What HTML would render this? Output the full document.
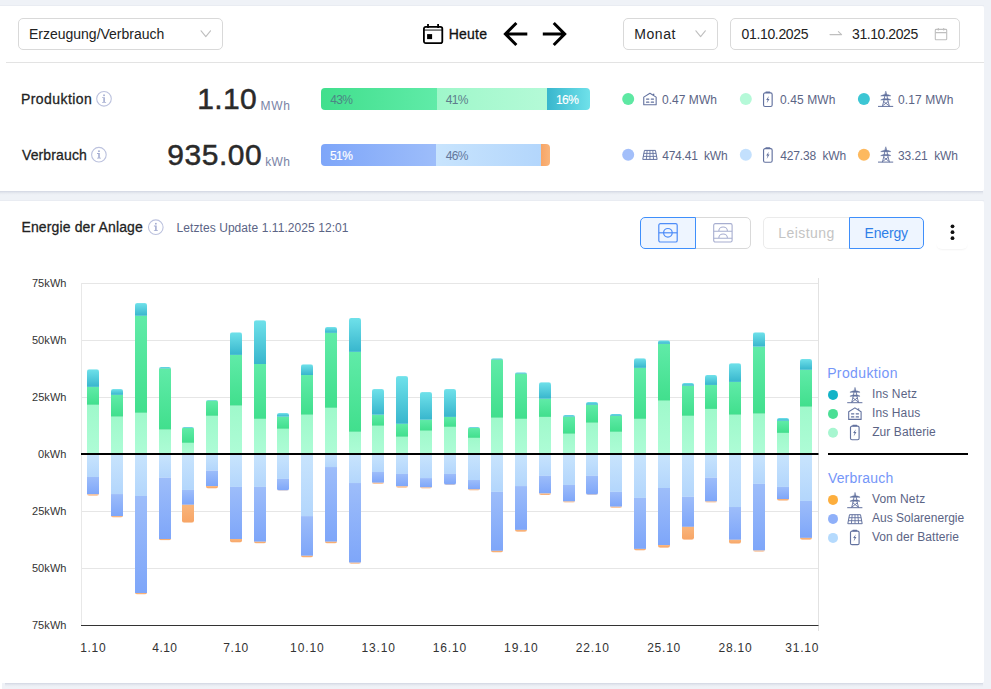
<!DOCTYPE html>
<html lang="de"><head><meta charset="utf-8"><title>Energie der Anlage</title>
<style>
html,body{margin:0;padding:0}
body{width:991px;height:689px;overflow:hidden;background:#eff2f7;position:relative;font-family:"Liberation Sans",sans-serif}
.card{position:absolute;background:#fff}
.sh{position:absolute;height:4px;background:linear-gradient(180deg,#d1d6e2 0,#e0e4ec 33%,#eaedf3 66%,#eff2f7 100%)}
.t{position:absolute;white-space:pre}
.box{position:absolute;box-sizing:border-box;border:1px solid #d9d9d9;border-radius:5px;background:#fff}
.ov{position:absolute;left:0;top:0}
</style></head><body>
<div class="sh" style="left:0;top:191px;width:983px"></div>
<div class="sh" style="left:5px;top:683px;width:978px"></div>
<div style="position:absolute;left:0;top:5px;width:984px;height:1px;background:#e9ecf2"></div>
<div style="position:absolute;left:0;top:200px;width:984px;height:1px;background:#e9ecf2"></div>
<div class="card" style="left:0;top:6px;width:984px;height:185px;border-radius:0 2px 2px 0"></div>
<div class="card" style="left:0;top:201px;width:984px;height:482px;border-radius:0 2px 2px 3px"></div>
<div style="position:absolute;left:0;top:680px;width:2px;height:9px;background:#fff"></div>
<div style="position:absolute;left:6px;top:62px;width:978px;height:1px;background:#e3e3e3"></div>
<div class="box" style="left:18px;top:18px;width:205px;height:32px"></div>
<div class="box" style="left:623px;top:18px;width:95px;height:32px"></div>
<div class="box" style="left:730px;top:18px;width:230px;height:32px"></div>
<div style="position:absolute;left:321px;top:88px;width:269px;height:22px;border-radius:4px;overflow:hidden">
<div style="position:absolute;left:0;top:0;width:116px;height:22px;background:linear-gradient(90deg,#41df8d,#60eba8)"></div>
<div style="position:absolute;left:116px;top:0;width:110px;height:22px;background:linear-gradient(90deg,#9ff7ca,#b4fad7)"></div>
<div style="position:absolute;left:226px;top:0;width:43px;height:22px;background:linear-gradient(90deg,#38b6cd,#6fe1ea)"></div></div>
<div style="position:absolute;left:321px;top:144px;width:229px;height:22px;border-radius:4px;overflow:hidden">
<div style="position:absolute;left:0;top:0;width:115px;height:22px;background:linear-gradient(90deg,#7ea6f9,#9dbdfa)"></div>
<div style="position:absolute;left:115px;top:0;width:105px;height:22px;background:linear-gradient(90deg,#c8e4fd,#b3d6fc)"></div>
<div style="position:absolute;left:220px;top:0;width:9px;height:22px;background:linear-gradient(90deg,#f7a566,#f9b57c)"></div></div>
<div class="box" style="left:695px;top:217px;width:56px;height:32px;border-radius:0 5px 5px 0"></div>
<div class="box" style="left:640px;top:217px;width:56px;height:32px;border-radius:5px 0 0 5px;border-color:#3f8ffb;background:#eef5ff"></div>
<div class="box" style="left:763px;top:217px;width:87px;height:32px;border-radius:5px 0 0 5px;border-color:#ebebeb"></div>
<div class="box" style="left:849px;top:217px;width:75px;height:32px;border-radius:0 5px 5px 0;border-color:#3f8ffb;background:#eef5ff"></div>
<div style="position:absolute;left:936px;top:217px;width:32px;height:32px;border-radius:6px;background:#fff;box-shadow:0 2px 2px -1px rgba(0,0,0,.05)"></div>
<svg style="position:absolute;left:0;top:0" width="991" height="689" viewBox="0 0 991 689">
<defs>
<linearGradient id="gN" x1="0" y1="0" x2="0" y2="1"><stop offset="0" stop-color="#6fe1ea"/><stop offset="1" stop-color="#38b6cd"/></linearGradient>
<linearGradient id="gH" x1="0" y1="0" x2="0" y2="1"><stop offset="0" stop-color="#60eba8"/><stop offset="1" stop-color="#41df8d"/></linearGradient>
<linearGradient id="gB" x1="0" y1="0" x2="0" y2="1"><stop offset="0" stop-color="#9ff9cb"/><stop offset="1" stop-color="#aefcd6"/></linearGradient>
<linearGradient id="gVB" x1="0" y1="0" x2="0" y2="1"><stop offset="0" stop-color="#c8e4fd"/><stop offset="1" stop-color="#b3d6fc"/></linearGradient>
<linearGradient id="gVS" x1="0" y1="0" x2="0" y2="1"><stop offset="0" stop-color="#9dbdfa"/><stop offset="1" stop-color="#7ea6f9"/></linearGradient>
<linearGradient id="gVN" x1="0" y1="0" x2="0" y2="1"><stop offset="0" stop-color="#f9b57c"/><stop offset="1" stop-color="#f7a566"/></linearGradient>
</defs>
<rect x="81.5" y="283.0" width="737.0" height="1" fill="#e6e6e6"/>
<rect x="81.5" y="340.0" width="737.0" height="1" fill="#e6e6e6"/>
<rect x="81.5" y="397.0" width="737.0" height="1" fill="#e6e6e6"/>
<rect x="81.5" y="511.0" width="737.0" height="1" fill="#e6e6e6"/>
<rect x="81.5" y="568.0" width="737.0" height="1" fill="#e6e6e6"/>
<rect x="81.0" y="283" width="1" height="342" fill="#e8e8e8"/>
<rect x="818.0" y="278" width="1" height="353" fill="#e2e2e2"/>
<clipPath id="c1"><path d="M87 454.0V371.43Q87 369.23 89.2 369.23H96.8Q99 369.23 99 371.43V493.52Q99 495.72 96.8 495.72H89.2Q87 495.72 87 493.52Z"/></clipPath>
<g clip-path="url(#c1)">
<rect x="87" y="404.79" width="12" height="49.21" fill="url(#gB)"/>
<rect x="87" y="386.87" width="12" height="17.92" fill="url(#gH)"/>
<rect x="87" y="369.23" width="12" height="17.64" fill="url(#gN)"/>
<rect x="87" y="454.00" width="12" height="22.97" fill="url(#gVB)"/>
<rect x="87" y="476.97" width="12" height="17.36" fill="url(#gVS)"/>
<rect x="87" y="494.34" width="12" height="1.38" fill="url(#gVN)"/>
</g>
<clipPath id="c2"><path d="M111 454.0V391.27Q111 389.07 113.2 389.07H120.8Q123 389.07 123 391.27V515.29Q123 517.49 120.8 517.49H113.2Q111 517.49 111 515.29Z"/></clipPath>
<g clip-path="url(#c2)">
<rect x="111" y="416.64" width="12" height="37.36" fill="url(#gB)"/>
<rect x="111" y="394.86" width="12" height="21.78" fill="url(#gH)"/>
<rect x="111" y="389.07" width="12" height="5.79" fill="url(#gN)"/>
<rect x="111" y="454.00" width="12" height="40.06" fill="url(#gVB)"/>
<rect x="111" y="494.06" width="12" height="22.05" fill="url(#gVS)"/>
<rect x="111" y="516.11" width="12" height="1.38" fill="url(#gVN)"/>
</g>
<clipPath id="c3"><path d="M135 454.0V305.28Q135 303.08 137.2 303.08H144.8Q147 303.08 147 305.28V592.19Q147 594.39 144.8 594.39H137.2Q135 594.39 135 592.19Z"/></clipPath>
<g clip-path="url(#c3)">
<rect x="135" y="412.78" width="12" height="41.22" fill="url(#gB)"/>
<rect x="135" y="315.76" width="12" height="97.02" fill="url(#gH)"/>
<rect x="135" y="303.08" width="12" height="12.68" fill="url(#gN)"/>
<rect x="135" y="454.00" width="12" height="41.99" fill="url(#gVB)"/>
<rect x="135" y="495.99" width="12" height="97.02" fill="url(#gVS)"/>
<rect x="135" y="593.02" width="12" height="1.38" fill="url(#gVN)"/>
</g>
<clipPath id="c4"><path d="M159 454.0V369.22Q159 367.02 161.2 367.02H168.8Q171 367.02 171 369.22V538.17Q171 540.37 168.8 540.37H161.2Q159 540.37 159 538.17Z"/></clipPath>
<g clip-path="url(#c4)">
<rect x="159" y="429.59" width="12" height="24.41" fill="url(#gB)"/>
<rect x="159" y="368.40" width="12" height="61.19" fill="url(#gH)"/>
<rect x="159" y="367.02" width="12" height="1.38" fill="url(#gN)"/>
<rect x="159" y="454.00" width="12" height="23.80" fill="url(#gVB)"/>
<rect x="159" y="477.80" width="12" height="61.19" fill="url(#gVS)"/>
<rect x="159" y="538.99" width="12" height="1.38" fill="url(#gVN)"/>
</g>
<clipPath id="c5"><path d="M182 454.0V429.31Q182 427.11 184.2 427.11H191.8Q194 427.11 194 429.31V520.53Q194 522.73 191.8 522.73H184.2Q182 522.73 182 520.53Z"/></clipPath>
<g clip-path="url(#c5)">
<rect x="182" y="442.82" width="12" height="11.18" fill="url(#gB)"/>
<rect x="182" y="427.94" width="12" height="14.88" fill="url(#gH)"/>
<rect x="182" y="427.11" width="12" height="0.83" fill="url(#gN)"/>
<rect x="182" y="454.00" width="12" height="35.93" fill="url(#gVB)"/>
<rect x="182" y="489.93" width="12" height="14.88" fill="url(#gVS)"/>
<rect x="182" y="504.81" width="12" height="17.92" fill="url(#gVN)"/>
</g>
<clipPath id="c6"><path d="M206 454.0V402.30Q206 400.10 208.2 400.10H215.8Q218 400.10 218 402.30V486.35Q218 488.55 215.8 488.55H208.2Q206 488.55 206 486.35Z"/></clipPath>
<g clip-path="url(#c6)">
<rect x="206" y="415.81" width="12" height="38.19" fill="url(#gB)"/>
<rect x="206" y="400.65" width="12" height="15.16" fill="url(#gH)"/>
<rect x="206" y="400.10" width="12" height="0.55" fill="url(#gN)"/>
<rect x="206" y="454.00" width="12" height="16.63" fill="url(#gVB)"/>
<rect x="206" y="470.63" width="12" height="15.44" fill="url(#gVS)"/>
<rect x="206" y="486.07" width="12" height="2.48" fill="url(#gVN)"/>
</g>
<clipPath id="c7"><path d="M230 454.0V334.49Q230 332.29 232.2 332.29H239.8Q242 332.29 242 334.49V540.37Q242 542.57 239.8 542.57H232.2Q230 542.57 230 540.37Z"/></clipPath>
<g clip-path="url(#c7)">
<rect x="230" y="405.61" width="12" height="48.39" fill="url(#gB)"/>
<rect x="230" y="354.90" width="12" height="50.72" fill="url(#gH)"/>
<rect x="230" y="332.29" width="12" height="22.60" fill="url(#gN)"/>
<rect x="230" y="454.00" width="12" height="32.90" fill="url(#gVB)"/>
<rect x="230" y="486.90" width="12" height="52.09" fill="url(#gVS)"/>
<rect x="230" y="538.99" width="12" height="3.58" fill="url(#gVN)"/>
</g>
<clipPath id="c8"><path d="M254 454.0V322.37Q254 320.17 256.2 320.17H263.8Q266 320.17 266 322.37V541.20Q266 543.40 263.8 543.40H256.2Q254 543.40 254 541.20Z"/></clipPath>
<g clip-path="url(#c8)">
<rect x="254" y="418.84" width="12" height="35.16" fill="url(#gB)"/>
<rect x="254" y="363.99" width="12" height="54.85" fill="url(#gH)"/>
<rect x="254" y="320.17" width="12" height="43.83" fill="url(#gN)"/>
<rect x="254" y="454.00" width="12" height="32.90" fill="url(#gVB)"/>
<rect x="254" y="486.90" width="12" height="54.85" fill="url(#gVS)"/>
<rect x="254" y="541.75" width="12" height="1.65" fill="url(#gVN)"/>
</g>
<clipPath id="c9"><path d="M277 454.0V415.25Q277 413.05 279.2 413.05H286.8Q289 413.05 289 415.25V488.56Q289 490.76 286.8 490.76H279.2Q277 490.76 277 488.56Z"/></clipPath>
<g clip-path="url(#c9)">
<rect x="277" y="428.77" width="12" height="25.23" fill="url(#gB)"/>
<rect x="277" y="416.64" width="12" height="12.13" fill="url(#gH)"/>
<rect x="277" y="413.05" width="12" height="3.58" fill="url(#gN)"/>
<rect x="277" y="454.00" width="12" height="24.90" fill="url(#gVB)"/>
<rect x="277" y="478.90" width="12" height="11.58" fill="url(#gVS)"/>
<rect x="277" y="490.48" width="12" height="0.28" fill="url(#gVN)"/>
</g>
<clipPath id="c10"><path d="M301 454.0V366.47Q301 364.27 303.2 364.27H310.8Q313 364.27 313 366.47V555.26Q313 557.46 310.8 557.46H303.2Q301 557.46 301 555.26Z"/></clipPath>
<g clip-path="url(#c10)">
<rect x="301" y="414.71" width="12" height="39.29" fill="url(#gB)"/>
<rect x="301" y="375.02" width="12" height="39.69" fill="url(#gH)"/>
<rect x="301" y="364.27" width="12" height="10.75" fill="url(#gN)"/>
<rect x="301" y="454.00" width="12" height="62.11" fill="url(#gVB)"/>
<rect x="301" y="516.11" width="12" height="39.69" fill="url(#gVS)"/>
<rect x="301" y="555.80" width="12" height="1.65" fill="url(#gVN)"/>
</g>
<clipPath id="c11"><path d="M325 454.0V329.26Q325 327.06 327.2 327.06H334.8Q337 327.06 337 329.26V541.20Q337 543.40 334.8 543.40H327.2Q325 543.40 325 541.20Z"/></clipPath>
<g clip-path="url(#c11)">
<rect x="325" y="407.82" width="12" height="46.18" fill="url(#gB)"/>
<rect x="325" y="332.84" width="12" height="74.97" fill="url(#gH)"/>
<rect x="325" y="327.06" width="12" height="5.79" fill="url(#gN)"/>
<rect x="325" y="454.00" width="12" height="13.05" fill="url(#gVB)"/>
<rect x="325" y="467.05" width="12" height="74.70" fill="url(#gVS)"/>
<rect x="325" y="541.75" width="12" height="1.65" fill="url(#gVN)"/>
</g>
<clipPath id="c12"><path d="M349 454.0V320.16Q349 317.96 351.2 317.96H358.8Q361 317.96 361 320.16V561.60Q361 563.80 358.8 563.80H351.2Q349 563.80 349 561.60Z"/></clipPath>
<g clip-path="url(#c12)">
<rect x="349" y="431.80" width="12" height="22.20" fill="url(#gB)"/>
<rect x="349" y="351.86" width="12" height="79.93" fill="url(#gH)"/>
<rect x="349" y="317.96" width="12" height="33.90" fill="url(#gN)"/>
<rect x="349" y="454.00" width="12" height="29.04" fill="url(#gVB)"/>
<rect x="349" y="483.04" width="12" height="79.66" fill="url(#gVS)"/>
<rect x="349" y="562.70" width="12" height="1.10" fill="url(#gVN)"/>
</g>
<clipPath id="c13"><path d="M372 454.0V391.27Q372 389.07 374.2 389.07H381.8Q384 389.07 384 391.27V481.66Q384 483.86 381.8 483.86H374.2Q372 483.86 372 481.66Z"/></clipPath>
<g clip-path="url(#c13)">
<rect x="372" y="425.73" width="12" height="28.27" fill="url(#gB)"/>
<rect x="372" y="414.71" width="12" height="11.03" fill="url(#gH)"/>
<rect x="372" y="389.07" width="12" height="25.63" fill="url(#gN)"/>
<rect x="372" y="454.00" width="12" height="18.01" fill="url(#gVB)"/>
<rect x="372" y="472.01" width="12" height="10.75" fill="url(#gVS)"/>
<rect x="372" y="482.76" width="12" height="1.10" fill="url(#gVN)"/>
</g>
<clipPath id="c14"><path d="M396 454.0V378.32Q396 376.12 398.2 376.12H405.8Q408 376.12 408 378.32V485.52Q408 487.72 405.8 487.72H398.2Q396 487.72 396 485.52Z"/></clipPath>
<g clip-path="url(#c14)">
<rect x="396" y="436.76" width="12" height="17.24" fill="url(#gB)"/>
<rect x="396" y="423.80" width="12" height="12.95" fill="url(#gH)"/>
<rect x="396" y="376.12" width="12" height="47.68" fill="url(#gN)"/>
<rect x="396" y="454.00" width="12" height="19.94" fill="url(#gVB)"/>
<rect x="396" y="473.94" width="12" height="12.40" fill="url(#gVS)"/>
<rect x="396" y="486.35" width="12" height="1.38" fill="url(#gVN)"/>
</g>
<clipPath id="c15"><path d="M420 454.0V394.31Q420 392.11 422.2 392.11H429.8Q432 392.11 432 394.31V486.35Q432 488.55 429.8 488.55H422.2Q420 488.55 420 486.35Z"/></clipPath>
<g clip-path="url(#c15)">
<rect x="420" y="430.69" width="12" height="23.31" fill="url(#gB)"/>
<rect x="420" y="419.67" width="12" height="11.03" fill="url(#gH)"/>
<rect x="420" y="392.11" width="12" height="27.56" fill="url(#gN)"/>
<rect x="420" y="454.00" width="12" height="24.08" fill="url(#gVB)"/>
<rect x="420" y="478.08" width="12" height="9.37" fill="url(#gVS)"/>
<rect x="420" y="487.45" width="12" height="1.10" fill="url(#gVN)"/>
</g>
<clipPath id="c16"><path d="M444 454.0V391.27Q444 389.07 446.2 389.07H453.8Q456 389.07 456 391.27V482.77Q456 484.97 453.8 484.97H446.2Q444 484.97 444 482.77Z"/></clipPath>
<g clip-path="url(#c16)">
<rect x="444" y="426.84" width="12" height="27.16" fill="url(#gB)"/>
<rect x="444" y="416.91" width="12" height="9.92" fill="url(#gH)"/>
<rect x="444" y="389.07" width="12" height="27.84" fill="url(#gN)"/>
<rect x="444" y="454.00" width="12" height="19.94" fill="url(#gVB)"/>
<rect x="444" y="473.94" width="12" height="10.75" fill="url(#gVS)"/>
<rect x="444" y="484.69" width="12" height="0.28" fill="url(#gVN)"/>
</g>
<clipPath id="c17"><path d="M468 454.0V429.31Q468 427.11 470.2 427.11H477.8Q480 427.11 480 429.31V488.28Q480 490.48 477.8 490.48H470.2Q468 490.48 468 488.28Z"/></clipPath>
<g clip-path="url(#c17)">
<rect x="468" y="437.86" width="12" height="16.14" fill="url(#gB)"/>
<rect x="468" y="427.94" width="12" height="9.92" fill="url(#gH)"/>
<rect x="468" y="427.11" width="12" height="0.83" fill="url(#gN)"/>
<rect x="468" y="454.00" width="12" height="26.01" fill="url(#gVB)"/>
<rect x="468" y="480.01" width="12" height="9.37" fill="url(#gVS)"/>
<rect x="468" y="489.38" width="12" height="1.10" fill="url(#gVN)"/>
</g>
<clipPath id="c18"><path d="M491 454.0V360.40Q491 358.20 493.2 358.20H500.8Q503 358.20 503 360.40V550.30Q503 552.50 500.8 552.50H493.2Q491 552.50 491 550.30Z"/></clipPath>
<g clip-path="url(#c18)">
<rect x="491" y="417.74" width="12" height="36.26" fill="url(#gB)"/>
<rect x="491" y="359.58" width="12" height="58.16" fill="url(#gH)"/>
<rect x="491" y="358.20" width="12" height="1.38" fill="url(#gN)"/>
<rect x="491" y="454.00" width="12" height="37.86" fill="url(#gVB)"/>
<rect x="491" y="491.86" width="12" height="58.99" fill="url(#gVS)"/>
<rect x="491" y="550.84" width="12" height="1.65" fill="url(#gVN)"/>
</g>
<clipPath id="c19"><path d="M515 454.0V374.46Q515 372.26 517.2 372.26H524.8Q527 372.26 527 374.46V529.62Q527 531.82 524.8 531.82H517.2Q515 531.82 515 529.62Z"/></clipPath>
<g clip-path="url(#c19)">
<rect x="515" y="418.84" width="12" height="35.16" fill="url(#gB)"/>
<rect x="515" y="373.64" width="12" height="45.20" fill="url(#gH)"/>
<rect x="515" y="372.26" width="12" height="1.38" fill="url(#gN)"/>
<rect x="515" y="454.00" width="12" height="32.07" fill="url(#gVB)"/>
<rect x="515" y="486.07" width="12" height="43.83" fill="url(#gVS)"/>
<rect x="515" y="529.90" width="12" height="1.93" fill="url(#gVN)"/>
</g>
<clipPath id="c20"><path d="M539 454.0V384.38Q539 382.18 541.2 382.18H548.8Q551 382.18 551 384.38V492.69Q551 494.89 548.8 494.89H541.2Q539 494.89 539 492.69Z"/></clipPath>
<g clip-path="url(#c20)">
<rect x="539" y="416.91" width="12" height="37.09" fill="url(#gB)"/>
<rect x="539" y="398.72" width="12" height="18.19" fill="url(#gH)"/>
<rect x="539" y="382.18" width="12" height="16.54" fill="url(#gN)"/>
<rect x="539" y="454.00" width="12" height="21.87" fill="url(#gVB)"/>
<rect x="539" y="475.87" width="12" height="17.64" fill="url(#gVS)"/>
<rect x="539" y="493.51" width="12" height="1.38" fill="url(#gVN)"/>
</g>
<clipPath id="c21"><path d="M563 454.0V417.18Q563 414.98 565.2 414.98H572.8Q575 414.98 575 417.18V500.41Q575 502.61 572.8 502.61H565.2Q563 502.61 563 500.41Z"/></clipPath>
<g clip-path="url(#c21)">
<rect x="563" y="433.73" width="12" height="20.27" fill="url(#gB)"/>
<rect x="563" y="416.64" width="12" height="17.09" fill="url(#gH)"/>
<rect x="563" y="414.98" width="12" height="1.65" fill="url(#gN)"/>
<rect x="563" y="454.00" width="12" height="30.97" fill="url(#gVB)"/>
<rect x="563" y="484.97" width="12" height="16.54" fill="url(#gVS)"/>
<rect x="563" y="501.50" width="12" height="1.10" fill="url(#gVN)"/>
</g>
<clipPath id="c22"><path d="M586 454.0V404.23Q586 402.03 588.2 402.03H595.8Q598 402.03 598 404.23V492.69Q598 494.89 595.8 494.89H588.2Q586 494.89 586 492.69Z"/></clipPath>
<g clip-path="url(#c22)">
<rect x="586" y="422.70" width="12" height="31.30" fill="url(#gB)"/>
<rect x="586" y="404.79" width="12" height="17.92" fill="url(#gH)"/>
<rect x="586" y="402.03" width="12" height="2.76" fill="url(#gN)"/>
<rect x="586" y="454.00" width="12" height="21.87" fill="url(#gVB)"/>
<rect x="586" y="475.87" width="12" height="18.74" fill="url(#gVS)"/>
<rect x="586" y="494.61" width="12" height="0.28" fill="url(#gVN)"/>
</g>
<clipPath id="c23"><path d="M610 454.0V416.08Q610 413.88 612.2 413.88H619.8Q622 413.88 622 416.08V505.64Q622 507.84 619.8 507.84H612.2Q610 507.84 610 505.64Z"/></clipPath>
<g clip-path="url(#c23)">
<rect x="610" y="431.80" width="12" height="22.20" fill="url(#gB)"/>
<rect x="610" y="415.81" width="12" height="15.99" fill="url(#gH)"/>
<rect x="610" y="413.88" width="12" height="1.93" fill="url(#gN)"/>
<rect x="610" y="454.00" width="12" height="37.86" fill="url(#gVB)"/>
<rect x="610" y="491.86" width="12" height="14.88" fill="url(#gVS)"/>
<rect x="610" y="506.74" width="12" height="1.10" fill="url(#gVN)"/>
</g>
<clipPath id="c24"><path d="M634 454.0V360.40Q634 358.20 636.2 358.20H643.8Q646 358.20 646 360.40V548.37Q646 550.57 643.8 550.57H636.2Q634 550.57 634 548.37Z"/></clipPath>
<g clip-path="url(#c24)">
<rect x="634" y="418.84" width="12" height="35.16" fill="url(#gB)"/>
<rect x="634" y="367.85" width="12" height="50.99" fill="url(#gH)"/>
<rect x="634" y="358.20" width="12" height="9.65" fill="url(#gN)"/>
<rect x="634" y="454.00" width="12" height="43.92" fill="url(#gVB)"/>
<rect x="634" y="497.92" width="12" height="50.99" fill="url(#gVS)"/>
<rect x="634" y="548.91" width="12" height="1.65" fill="url(#gVN)"/>
</g>
<clipPath id="c25"><path d="M658 454.0V342.49Q658 340.29 660.2 340.29H667.8Q670 340.29 670 342.49V545.61Q670 547.81 667.8 547.81H660.2Q658 547.81 658 545.61Z"/></clipPath>
<g clip-path="url(#c25)">
<rect x="658" y="400.65" width="12" height="53.35" fill="url(#gB)"/>
<rect x="658" y="343.87" width="12" height="56.78" fill="url(#gH)"/>
<rect x="658" y="340.29" width="12" height="3.58" fill="url(#gN)"/>
<rect x="658" y="454.00" width="12" height="34.00" fill="url(#gVB)"/>
<rect x="658" y="488.00" width="12" height="57.06" fill="url(#gVS)"/>
<rect x="658" y="545.06" width="12" height="2.76" fill="url(#gVN)"/>
</g>
<clipPath id="c26"><path d="M682 454.0V385.21Q682 383.01 684.2 383.01H691.8Q694 383.01 694 385.21V537.62Q694 539.82 691.8 539.82H684.2Q682 539.82 682 537.62Z"/></clipPath>
<g clip-path="url(#c26)">
<rect x="682" y="415.81" width="12" height="38.19" fill="url(#gB)"/>
<rect x="682" y="385.77" width="12" height="30.04" fill="url(#gH)"/>
<rect x="682" y="383.01" width="12" height="2.76" fill="url(#gN)"/>
<rect x="682" y="454.00" width="12" height="42.82" fill="url(#gVB)"/>
<rect x="682" y="496.82" width="12" height="30.04" fill="url(#gVS)"/>
<rect x="682" y="526.86" width="12" height="12.95" fill="url(#gVN)"/>
</g>
<clipPath id="c27"><path d="M705 454.0V377.22Q705 375.02 707.2 375.02H714.8Q717 375.02 717 377.22V500.41Q717 502.61 714.8 502.61H707.2Q705 502.61 705 500.41Z"/></clipPath>
<g clip-path="url(#c27)">
<rect x="705" y="408.92" width="12" height="45.08" fill="url(#gB)"/>
<rect x="705" y="384.94" width="12" height="23.98" fill="url(#gH)"/>
<rect x="705" y="375.02" width="12" height="9.92" fill="url(#gN)"/>
<rect x="705" y="454.00" width="12" height="23.80" fill="url(#gVB)"/>
<rect x="705" y="477.80" width="12" height="23.70" fill="url(#gVS)"/>
<rect x="705" y="501.50" width="12" height="1.10" fill="url(#gVN)"/>
</g>
<clipPath id="c28"><path d="M729 454.0V365.36Q729 363.16 731.2 363.16H738.8Q741 363.16 741 365.36V541.48Q741 543.68 738.8 543.68H731.2Q729 543.68 729 541.48Z"/></clipPath>
<g clip-path="url(#c28)">
<rect x="729" y="414.71" width="12" height="39.29" fill="url(#gB)"/>
<rect x="729" y="381.91" width="12" height="32.80" fill="url(#gH)"/>
<rect x="729" y="363.16" width="12" height="18.74" fill="url(#gN)"/>
<rect x="729" y="454.00" width="12" height="53.02" fill="url(#gVB)"/>
<rect x="729" y="507.02" width="12" height="32.80" fill="url(#gVS)"/>
<rect x="729" y="539.82" width="12" height="3.86" fill="url(#gVN)"/>
</g>
<clipPath id="c29"><path d="M753 454.0V334.49Q753 332.29 755.2 332.29H762.8Q765 332.29 765 334.49V549.47Q765 551.67 762.8 551.67H755.2Q753 551.67 753 549.47Z"/></clipPath>
<g clip-path="url(#c29)">
<rect x="753" y="413.61" width="12" height="40.39" fill="url(#gB)"/>
<rect x="753" y="346.63" width="12" height="66.98" fill="url(#gH)"/>
<rect x="753" y="332.29" width="12" height="14.33" fill="url(#gN)"/>
<rect x="753" y="454.00" width="12" height="29.86" fill="url(#gVB)"/>
<rect x="753" y="483.86" width="12" height="66.70" fill="url(#gVS)"/>
<rect x="753" y="550.57" width="12" height="1.10" fill="url(#gVN)"/>
</g>
<clipPath id="c30"><path d="M777 454.0V420.22Q777 418.02 779.2 418.02H786.8Q789 418.02 789 420.22V498.48Q789 500.68 786.8 500.68H779.2Q777 500.68 777 498.48Z"/></clipPath>
<g clip-path="url(#c30)">
<rect x="777" y="432.90" width="12" height="21.10" fill="url(#gB)"/>
<rect x="777" y="420.77" width="12" height="12.13" fill="url(#gH)"/>
<rect x="777" y="418.02" width="12" height="2.76" fill="url(#gN)"/>
<rect x="777" y="454.00" width="12" height="32.90" fill="url(#gVB)"/>
<rect x="777" y="486.90" width="12" height="12.13" fill="url(#gVS)"/>
<rect x="777" y="499.02" width="12" height="1.65" fill="url(#gVN)"/>
</g>
<clipPath id="c31"><path d="M800 454.0V361.23Q800 359.03 802.2 359.03H809.8Q812 359.03 812 361.23V537.62Q812 539.82 809.8 539.82H802.2Q800 539.82 800 537.62Z"/></clipPath>
<g clip-path="url(#c31)">
<rect x="800" y="406.71" width="12" height="47.29" fill="url(#gB)"/>
<rect x="800" y="369.78" width="12" height="36.93" fill="url(#gH)"/>
<rect x="800" y="359.03" width="12" height="10.75" fill="url(#gN)"/>
<rect x="800" y="454.00" width="12" height="46.95" fill="url(#gVB)"/>
<rect x="800" y="500.95" width="12" height="36.93" fill="url(#gVS)"/>
<rect x="800" y="537.89" width="12" height="1.93" fill="url(#gVN)"/>
</g>
<rect x="81.0" y="453.0" width="737.5" height="2" fill="#000"/>
<rect x="81.0" y="625" width="737.5" height="1" fill="#333"/>
<rect x="828" y="453.0" width="140" height="2" fill="#000"/>
<g transform="translate(199.8 28)" fill="none" stroke="#bfbfbf" stroke-width="1.1" stroke-linecap="round" stroke-linejoin="round"><path d="M1.3 2.8L6 8.6L10.7 2.8"/></g>
<g transform="translate(694.6 28)" fill="none" stroke="#bfbfbf" stroke-width="1.1" stroke-linecap="round" stroke-linejoin="round"><path d="M1.3 2.8L6 8.6L10.7 2.8"/></g>
<g transform="translate(829 28)" fill="none" stroke="#bfbfbf" stroke-width="1.1" stroke-linecap="round" stroke-linejoin="round"><path d="M1 6.6H12.6L9.4 3.6"/></g>
<g transform="translate(934 27)" fill="none" stroke="#bfbfbf" stroke-width="1.1" stroke-linejoin="round"><rect x="1.3" y="2.4" width="11.4" height="10.4" rx="0.8"/><path d="M1.3 5.6H12.7M4.3 1V3.4M9.7 1V3.4"/></g>
<g transform="translate(423 24)"><rect x="0.9" y="2.9" width="18.4" height="16.2" rx="1.9" fill="none" stroke="#000" stroke-width="1.8"/><rect x="1" y="5.6" width="18" height="0.9" fill="#000"/><rect x="4.1" y="0" width="1.8" height="4" fill="#000"/><rect x="14.2" y="0" width="1.8" height="4" fill="#000"/><rect x="4.1" y="10.1" width="5" height="5" fill="#000"/></g>
<g transform="translate(497.3 16) scale(1.5)"><path fill="#000" d="M20 11H7.83l5.59-5.59L12 4l-8 8 8 8 1.41-1.41L7.83 13H20v-2z"/></g>
<g transform="translate(536.8 16) scale(1.5)"><path fill="#000" d="M12 4l-1.41 1.41L16.17 11H4v2h12.17l-5.58 5.59L12 20l8-8z"/></g>
<g transform="translate(95.5 90.3)"><circle cx="8.5" cy="8.5" r="7.3" fill="none" stroke="#bcc2de" stroke-width="1.1"/>
<rect x="7.7" y="4.2" width="1.7" height="1.6" fill="#a6aed2"/><path d="M6.6 6.9H9.4V11.6H10.6V12.4H6.6V11.6H7.8V7.7H6.6Z" fill="#a6aed2"/></g>
<g transform="translate(90.4 146.2)"><circle cx="8.5" cy="8.5" r="7.3" fill="none" stroke="#bcc2de" stroke-width="1.1"/>
<rect x="7.7" y="4.2" width="1.7" height="1.6" fill="#a6aed2"/><path d="M6.6 6.9H9.4V11.6H10.6V12.4H6.6V11.6H7.8V7.7H6.6Z" fill="#a6aed2"/></g>
<g transform="translate(147.3 218.7)"><circle cx="8.5" cy="8.5" r="7.3" fill="none" stroke="#bcc2de" stroke-width="1.1"/>
<rect x="7.7" y="4.2" width="1.7" height="1.6" fill="#a6aed2"/><path d="M6.6 6.9H9.4V11.6H10.6V12.4H6.6V11.6H7.8V7.7H6.6Z" fill="#a6aed2"/></g>
<circle cx="628.2" cy="99" r="6.0" fill="#5ee8a3"/>
<circle cx="745.8" cy="99" r="6.0" fill="#b5f9d8"/>
<circle cx="863.9" cy="99" r="6.0" fill="#3cc6d4"/>
<circle cx="628.2" cy="154.7" r="6.0" fill="#a3bffa"/>
<circle cx="745.8" cy="154.7" r="6.0" fill="#c3e0fd"/>
<circle cx="863.9" cy="154.7" r="6.0" fill="#fdb95e"/>
<g transform="translate(642.95 92.5)" fill="none" stroke="#63729f" stroke-width="1.1" stroke-linejoin="round" stroke-linecap="round">
<path d="M0.8 4.6L7 0.7L13.2 4.6V12.2H0.8Z"/><path d="M10.6 2.6V1.2" stroke-width="1.5" stroke-linecap="butt"/>
<path d="M3.6 6.6H5.9M8.3 6.6H10.6M3.6 9.7H5.9M8.3 9.7H10.6" stroke-width="1.2"/></g>
<g transform="translate(762.65 91.4)" fill="none" stroke="#63729f" stroke-width="1.15" stroke-linejoin="round">
<rect x="0.9" y="1.5" width="8.6" height="13.6" rx="1.5"/><path d="M3.4 0.9H7" stroke-width="1.4" stroke-linecap="round"/>
<path d="M6.2 4.6L3.5 8.5H5L4 11.9L6.9 7.5H5.4Z" fill="#63729f" stroke="none"/></g>
<g transform="translate(877.7 91.0)" fill="none" stroke="#63729f" stroke-width="1" stroke-linecap="round" stroke-linejoin="round">
<path d="M0.7 15.4H15.1" stroke-width="1"/>
<path d="M8.2 0.4L9.2 4.1H7.2ZM3.4 4.75L5.8 3.75H10.6L13 4.75V4.95H3.4ZM3.4 8.75L5.8 7.7H10.6L13 8.75V8.95H3.4Z" fill="#63729f" stroke-width="0.5"/>
<path d="M7.2 4.5L6.5 8M9.2 4.5L9.9 8M6.4 9L4.7 15.2M10 9L11.7 15.2M6 10.6L11 14.4M10.4 10.6L5.4 14.4" stroke-width="0.9"/></g>
<g transform="translate(642.15 149.3)" fill="none" stroke="#63729f" stroke-width="1" stroke-linejoin="round">
<path d="M2.3 1.1H13.3L15 10.1H0.6Z"/><path d="M1.7 4.1H13.9M1.1 7.1H14.5M5 1.1L4.2 10.1M7.8 1.1V10.1M10.6 1.1L11.4 10.1" stroke-width="0.9"/></g>
<g transform="translate(762.65 147.1)" fill="none" stroke="#63729f" stroke-width="1.15" stroke-linejoin="round">
<rect x="0.9" y="1.5" width="8.6" height="13.6" rx="1.5"/><path d="M3.4 0.9H7" stroke-width="1.4" stroke-linecap="round"/>
<path d="M6.2 4.6L3.5 8.5H5L4 11.9L6.9 7.5H5.4Z" fill="#63729f" stroke="none"/></g>
<g transform="translate(877.7 146.7)" fill="none" stroke="#63729f" stroke-width="1" stroke-linecap="round" stroke-linejoin="round">
<path d="M0.7 15.4H15.1" stroke-width="1"/>
<path d="M8.2 0.4L9.2 4.1H7.2ZM3.4 4.75L5.8 3.75H10.6L13 4.75V4.95H3.4ZM3.4 8.75L5.8 7.7H10.6L13 8.75V8.95H3.4Z" fill="#63729f" stroke-width="0.5"/>
<path d="M7.2 4.5L6.5 8M9.2 4.5L9.9 8M6.4 9L4.7 15.2M10 9L11.7 15.2M6 10.6L11 14.4M10.4 10.6L5.4 14.4" stroke-width="0.9"/></g>
<g transform="translate(657.6 222.4)" fill="none" stroke="#4d8cf8" stroke-width="1.2"><rect x="1.2" y="1.2" width="18.4" height="18.4" rx="1.6"/><path d="M1.2 10.4H19.6"/><circle cx="10.3" cy="10.4" r="4.3"/></g>
<g transform="translate(712.5 222.4)" fill="none" stroke="#a7aed0" stroke-width="1.1"><rect x="1.2" y="1.2" width="18.4" height="18.4" rx="1.6"/><path d="M1.2 8.8H19.6M1.2 15.8H19.6M6.3 8.6A4.3 4 0 0 1 14.9 8.6M6.3 15.6A4.3 4 0 0 1 14.9 15.6"/></g>
<circle cx="952.5" cy="226.3" r="1.9" fill="#111"/>
<circle cx="952.5" cy="232.2" r="1.9" fill="#111"/>
<circle cx="952.5" cy="238.2" r="1.9" fill="#111"/>
<circle cx="833.0" cy="394.9" r="5.0" fill="#12b3c7"/>
<circle cx="833.0" cy="413.9" r="5.0" fill="#4bdf95"/>
<circle cx="833.0" cy="432.8" r="5.0" fill="#a7f6d0"/>
<circle cx="833.0" cy="499.9" r="5.0" fill="#fdae3d"/>
<circle cx="833.0" cy="518.9" r="5.0" fill="#8fb0f9"/>
<circle cx="833.0" cy="537.9" r="5.0" fill="#b5dafd"/>
<g transform="translate(846.9 387.3)" fill="none" stroke="#63729f" stroke-width="1" stroke-linecap="round" stroke-linejoin="round">
<path d="M0.7 15.4H15.1" stroke-width="1"/>
<path d="M8.2 0.4L9.2 4.1H7.2ZM3.4 4.75L5.8 3.75H10.6L13 4.75V4.95H3.4ZM3.4 8.75L5.8 7.7H10.6L13 8.75V8.95H3.4Z" fill="#63729f" stroke-width="0.5"/>
<path d="M7.2 4.5L6.5 8M9.2 4.5L9.9 8M6.4 9L4.7 15.2M10 9L11.7 15.2M6 10.6L11 14.4M10.4 10.6L5.4 14.4" stroke-width="0.9"/></g>
<g transform="translate(847.9 407.2)" fill="none" stroke="#63729f" stroke-width="1.1" stroke-linejoin="round" stroke-linecap="round">
<path d="M0.8 4.6L7 0.7L13.2 4.6V12.2H0.8Z"/><path d="M10.6 2.6V1.2" stroke-width="1.5" stroke-linecap="butt"/>
<path d="M3.6 6.6H5.9M8.3 6.6H10.6M3.6 9.7H5.9M8.3 9.7H10.6" stroke-width="1.2"/></g>
<g transform="translate(849.6 424.6)" fill="none" stroke="#63729f" stroke-width="1.15" stroke-linejoin="round">
<rect x="0.9" y="1.5" width="8.6" height="13.6" rx="1.5"/><path d="M3.4 0.9H7" stroke-width="1.4" stroke-linecap="round"/>
<path d="M6.2 4.6L3.5 8.5H5L4 11.9L6.9 7.5H5.4Z" fill="#63729f" stroke="none"/></g>
<g transform="translate(846.9 492.3)" fill="none" stroke="#63729f" stroke-width="1" stroke-linecap="round" stroke-linejoin="round">
<path d="M0.7 15.4H15.1" stroke-width="1"/>
<path d="M8.2 0.4L9.2 4.1H7.2ZM3.4 4.75L5.8 3.75H10.6L13 4.75V4.95H3.4ZM3.4 8.75L5.8 7.7H10.6L13 8.75V8.95H3.4Z" fill="#63729f" stroke-width="0.5"/>
<path d="M7.2 4.5L6.5 8M9.2 4.5L9.9 8M6.4 9L4.7 15.2M10 9L11.7 15.2M6 10.6L11 14.4M10.4 10.6L5.4 14.4" stroke-width="0.9"/></g>
<g transform="translate(847.2 513.6)" fill="none" stroke="#63729f" stroke-width="1" stroke-linejoin="round">
<path d="M2.3 1.1H13.3L15 10.1H0.6Z"/><path d="M1.7 4.1H13.9M1.1 7.1H14.5M5 1.1L4.2 10.1M7.8 1.1V10.1M10.6 1.1L11.4 10.1" stroke-width="0.9"/></g>
<g transform="translate(849.6 529.6)" fill="none" stroke="#63729f" stroke-width="1.15" stroke-linejoin="round">
<rect x="0.9" y="1.5" width="8.6" height="13.6" rx="1.5"/><path d="M3.4 0.9H7" stroke-width="1.4" stroke-linecap="round"/>
<path d="M6.2 4.6L3.5 8.5H5L4 11.9L6.9 7.5H5.4Z" fill="#63729f" stroke="none"/></g>
</svg>
<span class="t" style="left:29.05px;top:27.00px;color:#222;font-family:'Liberation Sans', sans-serif;font-size:14px;font-weight:400;letter-spacing:-0.013px;line-height:14px;white-space:pre;">Erzeugung/Verbrauch</span>
<span class="t" style="left:448.74px;top:27.00px;color:#111;font-family:'Liberation Sans', sans-serif;font-size:14px;font-weight:400;letter-spacing:0.211px;line-height:14px;white-space:pre;-webkit-text-stroke:0.3px currentColor;">Heute</span>
<span class="t" style="left:634.35px;top:27.00px;color:#222;font-family:'Liberation Sans', sans-serif;font-size:14px;font-weight:400;letter-spacing:0.524px;line-height:14px;white-space:pre;">Monat</span>
<span class="t" style="left:741.60px;top:27.00px;color:#222;font-family:'Liberation Sans', sans-serif;font-size:14px;font-weight:400;letter-spacing:-0.356px;line-height:14px;white-space:pre;">01.10.2025</span>
<span class="t" style="left:852.08px;top:27.00px;color:#222;font-family:'Liberation Sans', sans-serif;font-size:14px;font-weight:400;letter-spacing:-0.442px;line-height:14px;white-space:pre;">31.10.2025</span>
<span class="t" style="left:21.04px;top:92.00px;color:#222;font-family:'Liberation Sans', sans-serif;font-size:14px;font-weight:400;letter-spacing:0.417px;line-height:14px;white-space:pre;-webkit-text-stroke:0.28px currentColor;">Produktion</span>
<span class="t" style="left:21.99px;top:148.00px;color:#222;font-family:'Liberation Sans', sans-serif;font-size:14px;font-weight:400;letter-spacing:0.124px;line-height:14px;white-space:pre;-webkit-text-stroke:0.28px currentColor;">Verbrauch</span>
<span class="t" style="left:197.23px;top:84.00px;color:#2a2a2a;font-family:'Liberation Sans', sans-serif;font-size:30px;font-weight:400;letter-spacing:0.395px;line-height:30px;white-space:pre;-webkit-text-stroke:0.5px currentColor;">1.10</span>
<span class="t" style="left:260.48px;top:100.00px;color:#7a84a6;font-family:'Liberation Sans', sans-serif;font-size:12px;font-weight:400;letter-spacing:0.772px;line-height:12px;white-space:pre;">MWh</span>
<span class="t" style="left:167.33px;top:140.00px;color:#2a2a2a;font-family:'Liberation Sans', sans-serif;font-size:30px;font-weight:400;letter-spacing:0.503px;line-height:30px;white-space:pre;-webkit-text-stroke:0.5px currentColor;">935.00</span>
<span class="t" style="left:265.23px;top:156.00px;color:#7a84a6;font-family:'Liberation Sans', sans-serif;font-size:12px;font-weight:400;letter-spacing:0.397px;line-height:12px;white-space:pre;">kWh</span>
<span class="t" style="left:330.25px;top:94.00px;color:#4c8585;font-family:'Liberation Sans', sans-serif;font-size:12px;font-weight:400;letter-spacing:-0.671px;line-height:12px;white-space:pre;">43%</span>
<span class="t" style="left:445.85px;top:94.00px;color:#5e7d8c;font-family:'Liberation Sans', sans-serif;font-size:12px;font-weight:400;letter-spacing:-0.671px;line-height:12px;white-space:pre;">41%</span>
<span class="t" style="left:555.92px;top:94.00px;color:#fff;font-family:'Liberation Sans', sans-serif;font-size:12px;font-weight:400;letter-spacing:-0.490px;line-height:12px;white-space:pre;-webkit-text-stroke:0.15px currentColor;">16%</span>
<span class="t" style="left:329.92px;top:150.00px;color:#fff;font-family:'Liberation Sans', sans-serif;font-size:12px;font-weight:400;letter-spacing:-0.543px;line-height:12px;white-space:pre;-webkit-text-stroke:0.15px currentColor;">51%</span>
<span class="t" style="left:445.85px;top:150.00px;color:#63789c;font-family:'Liberation Sans', sans-serif;font-size:12px;font-weight:400;letter-spacing:-0.671px;line-height:12px;white-space:pre;">46%</span>
<span class="t" style="left:661.97px;top:94.00px;color:#5b6485;font-family:'Liberation Sans', sans-serif;font-size:12px;font-weight:400;letter-spacing:0.038px;line-height:12px;white-space:pre;">0.47 MWh</span>
<span class="t" style="left:779.97px;top:94.00px;color:#5b6485;font-family:'Liberation Sans', sans-serif;font-size:12px;font-weight:400;letter-spacing:0.096px;line-height:12px;white-space:pre;">0.45 MWh</span>
<span class="t" style="left:898.07px;top:94.00px;color:#5b6485;font-family:'Liberation Sans', sans-serif;font-size:12px;font-weight:400;letter-spacing:0.096px;line-height:12px;white-space:pre;">0.17 MWh</span>
<span class="t" style="left:662.15px;top:150.00px;color:#5b6485;font-family:'Liberation Sans', sans-serif;font-size:12px;font-weight:400;letter-spacing:-0.183px;line-height:12px;white-space:pre;">474.41  kWh</span>
<span class="t" style="left:780.15px;top:150.00px;color:#5b6485;font-family:'Liberation Sans', sans-serif;font-size:12px;font-weight:400;letter-spacing:-0.133px;line-height:12px;white-space:pre;">427.38  kWh</span>
<span class="t" style="left:897.91px;top:150.00px;color:#5b6485;font-family:'Liberation Sans', sans-serif;font-size:12px;font-weight:400;letter-spacing:-0.064px;line-height:12px;white-space:pre;">33.21  kWh</span>
<span class="t" style="left:21.44px;top:220.00px;color:#222;font-family:'Liberation Sans', sans-serif;font-size:14px;font-weight:400;letter-spacing:0.131px;line-height:14px;white-space:pre;-webkit-text-stroke:0.28px currentColor;">Energie der Anlage</span>
<span class="t" style="left:176.58px;top:222.00px;color:#5b6485;font-family:'Liberation Sans', sans-serif;font-size:12px;font-weight:400;letter-spacing:0.068px;line-height:12px;white-space:pre;">Letztes Update 1.11.2025 12:01</span>
<span class="t" style="left:778.25px;top:226.00px;color:#c4c4c4;font-family:'Liberation Sans', sans-serif;font-size:14px;font-weight:400;letter-spacing:0.443px;line-height:14px;white-space:pre;">Leistung</span>
<span class="t" style="left:864.55px;top:226.00px;color:#2f7fe8;font-family:'Liberation Sans', sans-serif;font-size:14px;font-weight:400;letter-spacing:-0.172px;line-height:14px;white-space:pre;">Energy</span>
<span class="t" style="left:31.91px;top:278.00px;color:#333;font-family:'Liberation Sans', sans-serif;font-size:11px;font-weight:400;letter-spacing:0.082px;line-height:11px;white-space:pre;">75kWh</span>
<span class="t" style="left:31.93px;top:335.00px;color:#333;font-family:'Liberation Sans', sans-serif;font-size:11px;font-weight:400;letter-spacing:0.076px;line-height:11px;white-space:pre;">50kWh</span>
<span class="t" style="left:32.00px;top:392.00px;color:#333;font-family:'Liberation Sans', sans-serif;font-size:11px;font-weight:400;letter-spacing:0.059px;line-height:11px;white-space:pre;">25kWh</span>
<span class="t" style="left:38.04px;top:449.00px;color:#333;font-family:'Liberation Sans', sans-serif;font-size:11px;font-weight:400;letter-spacing:0.100px;line-height:11px;white-space:pre;">0kWh</span>
<span class="t" style="left:32.00px;top:506.00px;color:#333;font-family:'Liberation Sans', sans-serif;font-size:11px;font-weight:400;letter-spacing:0.059px;line-height:11px;white-space:pre;">25kWh</span>
<span class="t" style="left:31.93px;top:563.00px;color:#333;font-family:'Liberation Sans', sans-serif;font-size:11px;font-weight:400;letter-spacing:0.076px;line-height:11px;white-space:pre;">50kWh</span>
<span class="t" style="left:31.91px;top:620.00px;color:#333;font-family:'Liberation Sans', sans-serif;font-size:11px;font-weight:400;letter-spacing:0.082px;line-height:11px;white-space:pre;">75kWh</span>
<span class="t" style="left:80.25px;top:642.00px;color:#333;font-family:'Liberation Sans', sans-serif;font-size:12px;font-weight:400;letter-spacing:0.671px;line-height:12px;white-space:pre;">1.10</span>
<span class="t" style="left:152.31px;top:642.00px;color:#333;font-family:'Liberation Sans', sans-serif;font-size:12px;font-weight:400;letter-spacing:0.423px;line-height:12px;white-space:pre;">4.10</span>
<span class="t" style="left:223.35px;top:642.00px;color:#333;font-family:'Liberation Sans', sans-serif;font-size:12px;font-weight:400;letter-spacing:0.518px;line-height:12px;white-space:pre;">7.10</span>
<span class="t" style="left:290.11px;top:642.00px;color:#333;font-family:'Liberation Sans', sans-serif;font-size:12px;font-weight:400;letter-spacing:0.875px;line-height:12px;white-space:pre;">10.10</span>
<span class="t" style="left:361.44px;top:642.00px;color:#333;font-family:'Liberation Sans', sans-serif;font-size:12px;font-weight:400;letter-spacing:0.875px;line-height:12px;white-space:pre;">13.10</span>
<span class="t" style="left:432.76px;top:642.00px;color:#333;font-family:'Liberation Sans', sans-serif;font-size:12px;font-weight:400;letter-spacing:0.875px;line-height:12px;white-space:pre;">16.10</span>
<span class="t" style="left:504.08px;top:642.00px;color:#333;font-family:'Liberation Sans', sans-serif;font-size:12px;font-weight:400;letter-spacing:0.875px;line-height:12px;white-space:pre;">19.10</span>
<span class="t" style="left:575.84px;top:642.00px;color:#333;font-family:'Liberation Sans', sans-serif;font-size:12px;font-weight:400;letter-spacing:0.765px;line-height:12px;white-space:pre;">22.10</span>
<span class="t" style="left:647.17px;top:642.00px;color:#333;font-family:'Liberation Sans', sans-serif;font-size:12px;font-weight:400;letter-spacing:0.765px;line-height:12px;white-space:pre;">25.10</span>
<span class="t" style="left:718.49px;top:642.00px;color:#333;font-family:'Liberation Sans', sans-serif;font-size:12px;font-weight:400;letter-spacing:0.765px;line-height:12px;white-space:pre;">28.10</span>
<span class="t" style="left:785.21px;top:642.00px;color:#333;font-family:'Liberation Sans', sans-serif;font-size:12px;font-weight:400;letter-spacing:0.824px;line-height:12px;white-space:pre;">31.10</span>
<span class="t" style="left:827.15px;top:366.00px;color:#7596f8;font-family:'Liberation Sans', sans-serif;font-size:14px;font-weight:400;letter-spacing:0.388px;line-height:14px;white-space:pre;">Produktion</span>
<span class="t" style="left:871.95px;top:388.00px;color:#5b6485;font-family:'Liberation Sans', sans-serif;font-size:12px;font-weight:400;letter-spacing:0.138px;line-height:12px;white-space:pre;">Ins Netz</span>
<span class="t" style="left:871.95px;top:407.00px;color:#5b6485;font-family:'Liberation Sans', sans-serif;font-size:12px;font-weight:400;letter-spacing:0.131px;line-height:12px;white-space:pre;">Ins Haus</span>
<span class="t" style="left:872.18px;top:426.00px;color:#5b6485;font-family:'Liberation Sans', sans-serif;font-size:12px;font-weight:400;letter-spacing:0.079px;line-height:12px;white-space:pre;">Zur Batterie</span>
<span class="t" style="left:827.88px;top:471.00px;color:#7596f8;font-family:'Liberation Sans', sans-serif;font-size:14px;font-weight:400;letter-spacing:0.190px;line-height:14px;white-space:pre;">Verbrauch</span>
<span class="t" style="left:871.97px;top:493.00px;color:#5b6485;font-family:'Liberation Sans', sans-serif;font-size:12px;font-weight:400;letter-spacing:0.178px;line-height:12px;white-space:pre;">Vom Netz</span>
<span class="t" style="left:871.98px;top:512.00px;color:#5b6485;font-family:'Liberation Sans', sans-serif;font-size:12px;font-weight:400;letter-spacing:0.010px;line-height:12px;white-space:pre;">Aus Solarenergie</span>
<span class="t" style="left:871.97px;top:531.00px;color:#5b6485;font-family:'Liberation Sans', sans-serif;font-size:12px;font-weight:400;letter-spacing:0.064px;line-height:12px;white-space:pre;">Von der Batterie</span>
</body></html>
